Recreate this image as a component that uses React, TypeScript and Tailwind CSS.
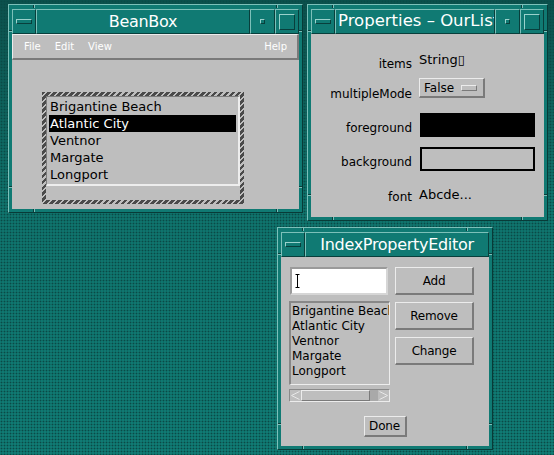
import React from 'react';

const seg =
  'bg-[#107a73] border border-t-[#7cc0b9] border-l-[#7cc0b9] border-b-[#083f3c] border-r-[#083f3c]';
const raised =
  'bg-[#bebebe] border-t border-l border-t-[#ececec] border-l-[#ececec] border-b-2 border-r-2 border-b-[#7a7a7a] border-r-[#7a7a7a]';
const sunken =
  'border-t-2 border-l-2 border-t-[#888888] border-l-[#888888] border-b border-r border-b-[#ededed] border-r-[#ededed]';

const vNotch = 'absolute w-[2px] h-[3px] border-l border-l-[#083f3c] border-r border-r-[#7cc0b9]';
const hNotch = 'absolute h-[2px] w-[3px] border-t border-t-[#083f3c] border-b border-b-[#7cc0b9]';

function Notches() {
  return (
    <>
      <div className={`${vNotch} top-0 left-[24px]`} />
      <div className={`${vNotch} top-0 right-[24px]`} />
      <div className={`${vNotch} bottom-0 left-[24px]`} />
      <div className={`${vNotch} bottom-0 right-[24px]`} />
      <div className={`${hNotch} left-0 top-[25px]`} />
      <div className={`${hNotch} right-0 top-[25px]`} />
      <div className={`${hNotch} left-0 bottom-[24px]`} />
      <div className={`${hNotch} right-0 bottom-[24px]`} />
    </>
  );
}

function MenuButton() {
  return (
    <div className={`${seg} w-[24px] shrink-0 flex items-center justify-center`}>
      <div className="w-[16px] h-[5px] border border-t-[#9ad2cc] border-l-[#9ad2cc] border-b-[#083f3c] border-r-[#083f3c]" />
    </div>
  );
}

function WinControls() {
  return (
    <>
      <div className={`${seg} w-[25px] shrink-0 flex items-center justify-center`}>
        <div className="w-[5px] h-[5px] border border-t-[#9ad2cc] border-l-[#9ad2cc] border-b-[#083f3c] border-r-[#083f3c]" />
      </div>
      <div className={`${seg} w-[24px] shrink-0 flex items-center justify-center`}>
        <div className="w-[16px] h-[16px] border border-t-[#9ad2cc] border-l-[#9ad2cc] border-b-[#083f3c] border-r-[#083f3c]" />
      </div>
    </>
  );
}

const frame =
  'absolute flex flex-col bg-[#107a73] border border-t-[#7cc0b9] border-l-[#7cc0b9] border-b-[#073b38] border-r-[#073b38] pt-[4px] px-[3px] pb-[3px]';

function BeanBox() {
  const items = ['Brigantine Beach', 'Atlantic City', 'Ventnor', 'Margate', 'Longport'];
  return (
    <div className={`${frame} left-[8px] top-[4px] w-[295px] h-[209px]`}>
      <Notches />
      <div className="flex h-[25px] shrink-0">
        <MenuButton />
        <div className={`${seg} flex-1 flex items-center justify-center text-white text-[16px] tracking-[-0.3px]`}>
          BeanBox
        </div>
        <WinControls />
      </div>
      <div className="flex-1 bg-[#bebebe] flex flex-col">
        <div className={`${raised} h-[26px] shrink-0 flex items-center gap-[14px] pl-[11px] pr-[10px] text-[10px] text-white`}>
          <span>File</span>
          <span>Edit</span>
          <span>View</span>
          <span className="ml-auto">Help</span>
        </div>
        <div className="ml-[30px] mt-[32px] w-[202px] h-[112px] p-[4px] bg-[repeating-linear-gradient(135deg,#4a4a4a_0px,#4a4a4a_2.6px,#bebebe_2.6px,#bebebe_4.2px)]">
          <div className="w-full h-full bg-[#bebebe]">
            <div className="h-[90px] border-t border-l border-t-[#7d7d7d] border-l-[#7d7d7d] border-b-2 border-r-2 border-b-[#ededed] border-r-[#ededed] pt-[1px] px-[2px] text-[13px] text-black">
              {items.map((it) => (
                <div
                  key={it}
                  className={`h-[17px] leading-[17px] pl-[1px] whitespace-nowrap ${
                    it === 'Atlantic City' ? 'bg-black text-white' : ''
                  }`}
                >
                  {it}
                </div>
              ))}
            </div>
          </div>
        </div>
      </div>
    </div>
  );
}

function Properties() {
  return (
    <div className={`${frame} left-[307px] top-[4px] w-[241px] h-[217px]`}>
      <Notches />
      <div className="flex h-[25px] shrink-0">
        <MenuButton />
        <div className={`${seg} flex-1 min-w-0 overflow-hidden flex items-center pl-[2px] text-white text-[16.5px] whitespace-nowrap`}>
          Properties – OurList
        </div>
        <WinControls />
      </div>
      <div className="flex-1 bg-[#bebebe] flex flex-col text-black text-[12px]">
        <div className="flex items-center h-[20px] mt-[16px]">
          <div className="w-[101px] text-right pt-[8px]">items</div>
          <div className="ml-[7px] text-[13px]">String▯</div>
        </div>
        <div className="flex items-center h-[20px] mt-[8px]">
          <div className="w-[101px] text-right pt-[12px]">multipleMode</div>
          <div className={`ml-[7px] w-[66px] h-[20px] ${raised} flex items-center pl-[4px]`}>
            <span>False</span>
            <div className="ml-[7px] w-[16px] h-[6px] border border-t-[#ececec] border-l-[#ececec] border-b-[#7a7a7a] border-r-[#7a7a7a]" />
          </div>
        </div>
        <div className="flex items-center h-[24px] mt-[15px]">
          <div className="w-[101px] text-right pt-[6px]">foreground</div>
          <div className="ml-[8px] w-[115px] h-[24px] bg-black" />
        </div>
        <div className="flex items-center h-[24px] mt-[10px]">
          <div className="w-[101px] text-right pt-[6px]">background</div>
          <div className="ml-[8px] w-[115px] h-[24px] border-2 border-black bg-[#bebebe]" />
        </div>
        <div className="flex items-center h-[20px] mt-[14px]">
          <div className="w-[101px] text-right pt-[4px]">font</div>
          <div className="ml-[7px] text-[13px]">Abcde...</div>
        </div>
      </div>
    </div>
  );
}

function Btn({ label, className }: { label: string; className: string }) {
  return (
    <div className={`${raised} ${className} flex items-center justify-center text-[12px] tracking-[-0.2px] text-black`}>
      {label}
    </div>
  );
}

function Editor() {
  const items = ['Brigantine Beach', 'Atlantic City', 'Ventnor', 'Margate', 'Longport'];
  return (
    <div className={`${frame} left-[277px] top-[227px] w-[216px] h-[223px]`}>
      <Notches />
      <div className="flex h-[25px] shrink-0">
        <MenuButton />
        <div className={`${seg} flex-1 flex items-center justify-center text-white text-[16px] tracking-[-0.3px] whitespace-nowrap`}>
          IndexPropertyEditor
        </div>
      </div>
      <div className="flex-1 bg-[#bebebe] flex flex-col pt-[10px]">
        <div className="flex pl-[8px]">
          <div className="w-[101px] flex flex-col">
            <div className="ml-[1px] w-[98px] h-[28px] bg-white border-2 border-t-[#9a9a9a] border-l-[#9a9a9a] border-b-[#d6d6d6] border-r-[#d6d6d6] flex items-center pl-[3px]">
              <svg width="6" height="14" viewBox="0 0 6 14">
                <path d="M0.5 0.5h4M2.5 0.5v13M0.5 13.5h4" stroke="#000" strokeWidth="1" fill="none" />
              </svg>
            </div>
            <div className={`mt-[6px] h-[84px] ${sunken} pl-[1px] pt-[1px] text-[12px] text-black overflow-hidden`}>
              {items.map((it) => (
                <div key={it} className="h-[15px] leading-[15px] whitespace-nowrap">
                  {it}
                </div>
              ))}
            </div>
            <div className="mt-[4px] h-[13px] flex border border-t-[#8a8a8a] border-l-[#8a8a8a] border-b-[#ececec] border-r-[#ececec] bg-[#a9a9a9]">
              <svg width="11" height="11" viewBox="0 0 11 11" className="shrink-0 bg-[#bebebe]">
                <path d="M9.5 1.5L1.5 5.5L9.5 9.5" stroke="#e8e8e8" fill="none" />
              </svg>
              <div className="w-[69px] h-full bg-[#bebebe] border-t border-l border-t-[#ececec] border-l-[#ececec] border-b border-r border-b-[#7a7a7a] border-r-[#7a7a7a]" />
              <div className="flex-1" />
              <svg width="11" height="11" viewBox="0 0 11 11" className="shrink-0 bg-[#bebebe]">
                <path d="M1.5 1.5L9.5 5.5L1.5 9.5" stroke="#e8e8e8" fill="none" />
              </svg>
            </div>
          </div>
          <div className="ml-[5px] w-[79px] flex flex-col">
            <Btn label="Add" className="h-[28px]" />
            <Btn label="Remove" className="h-[28px] mt-[7px]" />
            <Btn label="Change" className="h-[28px] mt-[7px]" />
          </div>
        </div>
        <div className="flex justify-center mt-[14px]">
          <Btn label="Done" className="w-[43px] h-[21px]" />
        </div>
      </div>
    </div>
  );
}

export default function App() {
  return (
    <div className="w-[554px] h-[455px] overflow-hidden bg-[linear-gradient(180deg,#0b504c_0px,#0f736c_210px,#107b74_455px)] font-['DejaVu_Sans',sans-serif]">
      <div className="relative w-full h-full bg-[radial-gradient(circle,#0a4a46_0.8px,transparent_1.1px)] bg-size-[3px_3px]">
        <BeanBox />
        <Properties />
        <Editor />
      </div>
    </div>
  );
}
